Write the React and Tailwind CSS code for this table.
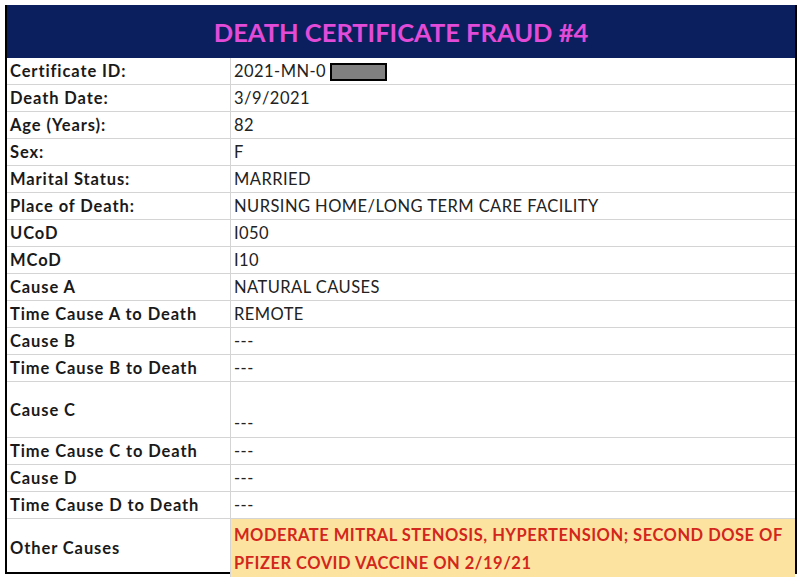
const rows = [
  { label: "Certificate ID:", value: "2021-MN-0", redact: true },
  { label: "Death Date:", value: "3/9/2021" },
  { label: "Age (Years):", value: "82" },
  { label: "Sex:", value: "F" },
  { label: "Marital Status:", value: "MARRIED" },
  { label: "Place of Death:", value: "NURSING HOME/LONG TERM CARE FACILITY" },
  { label: "UCoD", value: "I050" },
  { label: "MCoD", value: "I10" },
  { label: "Cause A", value: "NATURAL CAUSES" },
  { label: "Time Cause A to Death", value: "REMOTE" },
  { label: "Cause B", value: "---" },
  { label: "Time Cause B to Death", value: "---" },
  { label: "Cause C", value: "---", tall: true },
  { label: "Time Cause C to Death", value: "---" },
  { label: "Cause D", value: "---" },
  { label: "Time Cause D to Death", value: "---" },
];

function Row({ label, value, redact, tall }) {
  return (
    <div className={`grid grid-cols-[224px_1fr] border-b border-[#d4d4d4] ${tall ? "h-[56px]" : "h-[27px]"}`}>
      <div className="flex items-center border-r border-[#d4d4d4] pl-[3px] pt-[1px] text-[16.5px] font-bold tracking-[0.9px] text-[#1a1a1a]">
        {label}
      </div>
      <div className={`flex pl-[3px] text-[16.5px] tracking-[0.45px] text-[#222] ${tall ? "items-end pb-[1px]" : "items-center pt-[1px]"}`}>
        {value}
        {redact && <span className="ml-[4px] inline-block h-[18px] w-[57px] border-2 border-black bg-[#808080]" />}
      </div>
    </div>
  );
}

export default function App() {
  return (
    <div className="h-[577px] w-[800px] bg-white pt-[5px] pl-[5px]" style={{ fontFamily: "Lato, 'Open Sans', sans-serif" }}>
      <div className="w-[792px] border-x-2 border-b-2 border-black">
        <div className="flex h-[53px] items-center justify-center bg-[#0b1f5e] pt-[1px] text-[25.5px] font-bold text-[#e14bd8]">
          DEATH CERTIFICATE FRAUD #4
        </div>
        {rows.map((r) => (
          <Row key={r.label} {...r} />
        ))}
        <div className="grid h-[53px] grid-cols-[224px_1fr]">
          <div className="flex items-center border-r border-[#d4d4d4] pl-[3px] pt-[1px] text-[16.5px] font-bold tracking-[0.9px] text-[#1a1a1a]">
            Other Causes
          </div>
          <div className="bg-[#fce4a0] pl-[3px] pt-[2px] text-[16.5px] font-bold leading-[28px] tracking-[0.5px] text-[#d3261c]">
            MODERATE MITRAL STENOSIS, HYPERTENSION; SECOND DOSE OF PFIZER COVID VACCINE ON 2/19/21
          </div>
        </div>
      </div>
    </div>
  );
}
